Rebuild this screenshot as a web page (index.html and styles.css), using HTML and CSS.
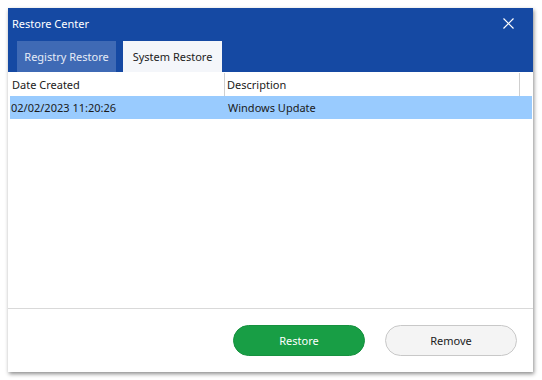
FILE: index.html
```html
<!DOCTYPE html>
<html lang="en">
<head>
    <meta charset="UTF-8">
    <title>Restore Center</title>
    <link rel="stylesheet" href="styles.css">
</head>
<body>

    <div class="window">
        <div class="titlebar">
            <div class="title-row">
                <span class="title">Restore Center</span>
                <svg class="close" width="11" height="11" viewBox="0 0 11 11">
                    <path d="M0.5 0.5 L10.5 10.5 M10.5 0.5 L0.5 10.5" stroke="#ffffff" stroke-width="1.2" fill="none"/>
                </svg>
            </div>
            <div class="tabs">
                <div class="tab">Registry Restore</div>
                <div class="tab active">System Restore</div>
            </div>
        </div>

        <div class="list">
            <div class="list-head">
                <div class="col col-date">Date Created</div>
                <div class="col col-desc">Description</div>
            </div>
            <div class="list-row selected">
                <div class="col col-date">02/02/2023 11:20:26</div>
                <div class="col col-desc">Windows Update</div>
            </div>
        </div>

        <div class="footer">
            <button class="btn btn-restore">Restore</button>
            <button class="btn btn-remove">Remove</button>
        </div>
    </div>

</body>
</html>
```

FILE: styles.css
```css
* {
    box-sizing: border-box;
    margin: 0;
    padding: 0;
}

body {
    font-family: 'Noto Sans', 'Open Sans', sans-serif;
    font-size: 11px;
    color: #1a1a1a;
    background-color: #ffffff;
}

.window {
    margin: 8px;
    width: 525px;
    height: 364px;
    background-color: #ffffff;
    box-shadow: 1px 2px 4px rgba(0, 0, 0, 0.45);
    display: flex;
    flex-direction: column;
}

.titlebar {
    background-color: #1549a3;
    height: 64px;
    display: flex;
    flex-direction: column;
}

.title-row {
    height: 33px;
    display: flex;
    align-items: center;
    justify-content: space-between;
    padding: 0 19px 3px 4px;
}

.title {
    color: #ffffff;
    font-size: 11px;
}

.tabs {
    display: flex;
    gap: 7px;
    padding-left: 9px;
    height: 31px;
}

.tab {
    width: 99px;
    display: flex;
    align-items: center;
    justify-content: center;
    background-color: #3f6ab5;
    color: #e6ecf7;
}

.tab.active {
    background-color: #f4f6fa;
    color: #222;
}

.list {
    flex: 1;
    padding: 0 2px 0 2px;
}

.list-head,
.list-row {
    display: flex;
}

.list-head {
    height: 24px;
}

.list-row {
    height: 23px;
}

.col {
    display: flex;
    align-items: center;
    padding-left: 2px;
    white-space: nowrap;
}

.col-date {
    width: 215px;
}

.col-desc {
    width: 295px;
}

.list-head .col-date {
    border-right: 1px solid #cfcfcf;
}

.list-head .col-desc {
    border-right: 1px solid #cfcfcf;
    padding-left: 2px;
}

.list-head .col {
    margin-top: 1px;
}

.list-row.selected {
    background-color: #99cbfe;
    width: 522px;
}

.list-row .col-date {
    width: 216px;
    padding-left: 1px;
}

.footer {
    height: 64px;
    border-top: 1px solid #d9d9d9;
    display: flex;
    justify-content: flex-end;
    align-items: flex-start;
    gap: 20px;
    padding: 16px 16px 0 0;
}

.btn {
    width: 132px;
    height: 31px;
    border-radius: 16px;
    font-family: inherit;
    font-size: 11px;
    cursor: pointer;
}

.btn-restore {
    background-color: #189e45;
    border: 1px solid #16913f;
    color: #ffffff;
}

.btn-remove {
    background-color: #f4f4f4;
    border: 1px solid #c8c8c8;
    color: #222;
}
```
